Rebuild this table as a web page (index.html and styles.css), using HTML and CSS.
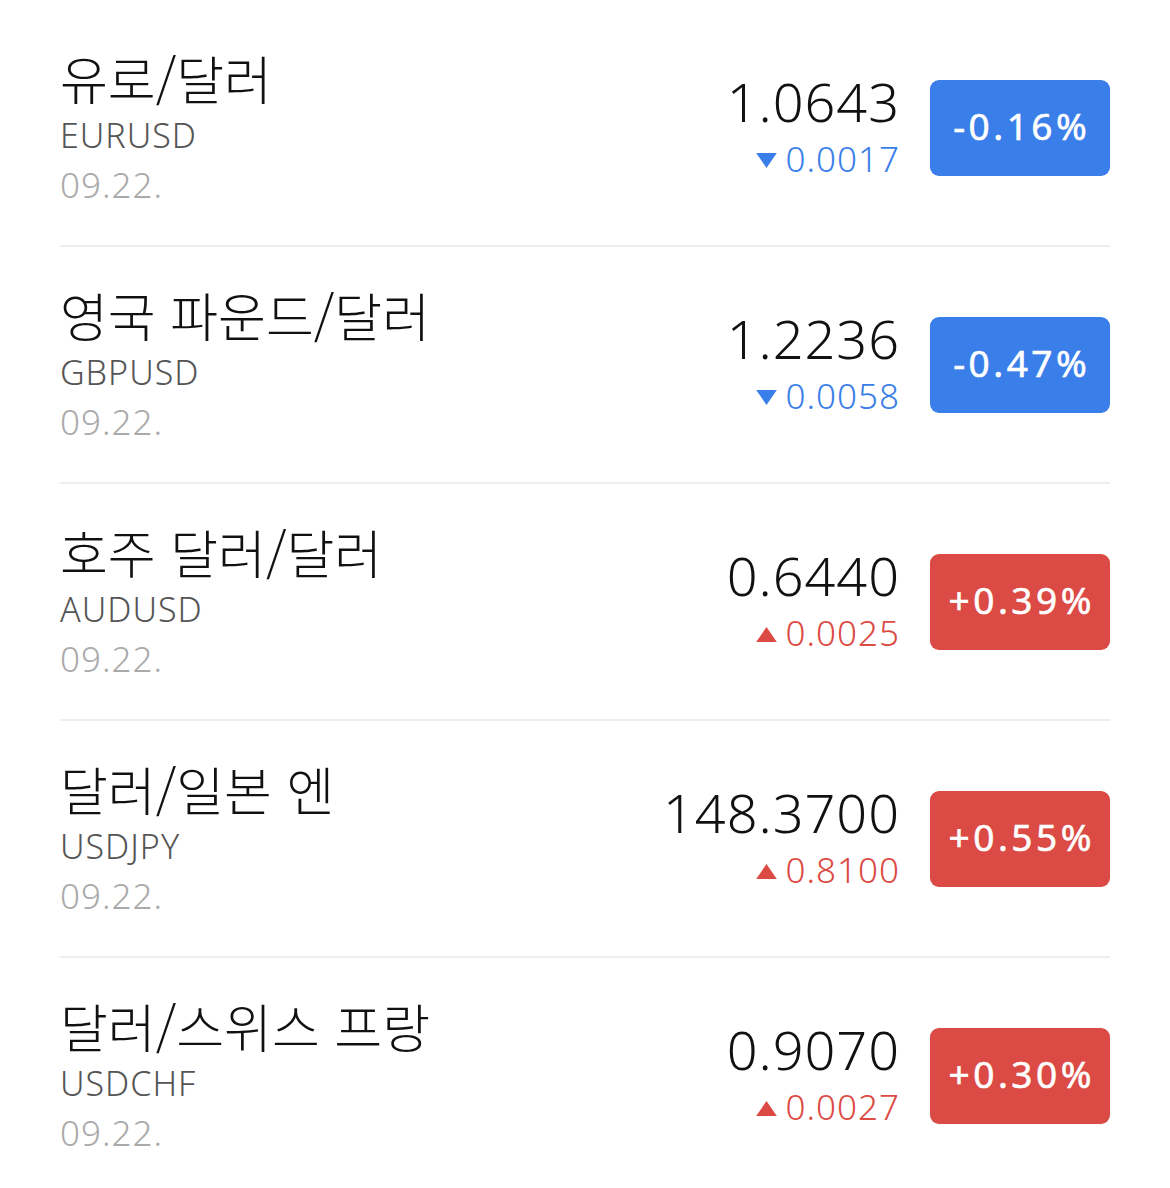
FILE: index.html
```html
<!DOCTYPE html>
<html lang="ko">
<head>
<meta charset="utf-8">
<title>환율</title>
<link rel="stylesheet" href="styles.css">
</head>
<body>
<ul class="list">
  <li class="item">
    <div class="info">
      <div class="name">유로/달러</div>
      <div class="code">EURUSD</div>
      <div class="date">09.22.</div>
    </div>
    <div class="quote">
      <div class="price">1.0643</div>
      <div class="change down"><svg class="tri" viewBox="0 0 22 16"><path d="M0 0H22L11 16Z"/></svg>0.0017</div>
    </div>
    <div class="badge down">-0.16%</div>
  </li>
  <li class="item">
    <div class="info">
      <div class="name">영국 파운드/달러</div>
      <div class="code">GBPUSD</div>
      <div class="date">09.22.</div>
    </div>
    <div class="quote">
      <div class="price">1.2236</div>
      <div class="change down"><svg class="tri" viewBox="0 0 22 16"><path d="M0 0H22L11 16Z"/></svg>0.0058</div>
    </div>
    <div class="badge down">-0.47%</div>
  </li>
  <li class="item">
    <div class="info">
      <div class="name">호주 달러/달러</div>
      <div class="code">AUDUSD</div>
      <div class="date">09.22.</div>
    </div>
    <div class="quote">
      <div class="price">0.6440</div>
      <div class="change up"><svg class="tri" viewBox="0 0 22 16"><path d="M0 16H22L11 0Z"/></svg>0.0025</div>
    </div>
    <div class="badge up">+0.39%</div>
  </li>
  <li class="item">
    <div class="info">
      <div class="name">달러/일본 엔</div>
      <div class="code">USDJPY</div>
      <div class="date">09.22.</div>
    </div>
    <div class="quote">
      <div class="price">148.3700</div>
      <div class="change up"><svg class="tri" viewBox="0 0 22 16"><path d="M0 16H22L11 0Z"/></svg>0.8100</div>
    </div>
    <div class="badge up">+0.55%</div>
  </li>
  <li class="item">
    <div class="info">
      <div class="name">달러/스위스 프랑</div>
      <div class="code">USDCHF</div>
      <div class="date">09.22.</div>
    </div>
    <div class="quote">
      <div class="price">0.9070</div>
      <div class="change up"><svg class="tri" viewBox="0 0 22 16"><path d="M0 16H22L11 0Z"/></svg>0.0027</div>
    </div>
    <div class="badge up">+0.30%</div>
  </li>
</ul>
</body>
</html>
```
FILE: styles.css
```css
html, body {
  margin: 0;
  padding: 0;
  background: #fff;
}
body {
  font-family: "Noto Sans", "Noto Sans CJK KR", sans-serif;
  color: #111;
}
.list {
  list-style: none;
  margin: 0;
  padding: 10px 60px 0;
}
.item {
  display: flex;
  align-items: center;
  height: 235px;
  border-bottom: 2px solid #eeeeee;
}
.item:last-child {
  border-bottom: none;
}
.info {
  flex: 1;
  display: flex;
  flex-direction: column;
}
.name {
  font-family: "Noto Sans CJK KR", sans-serif;
  font-size: 52px;
  line-height: 66px;
  font-weight: 300;
  color: #111;
}
.code {
  font-size: 34px;
  line-height: 48px;
  font-weight: 300;
  color: #555;
  letter-spacing: 1px;
}
.date {
  font-size: 35px;
  line-height: 52px;
  font-weight: 300;
  color: #aaa;
  letter-spacing: 1px;
}
.quote {
  display: flex;
  flex-direction: column;
  align-items: flex-end;
  margin-right: 30px;
}
.price {
  font-size: 54px;
  line-height: 62px;
  font-weight: 300;
  color: #111;
  letter-spacing: 1px;
}
.change {
  display: flex;
  align-items: center;
  font-size: 35px;
  line-height: 54px;
  font-weight: 300;
  letter-spacing: 1px;
}
.change.down { color: #3a7ee9; }
.change.up { color: #dc4a44; }
.tri {
  width: 23px;
  height: 15px;
  margin: 3px 8px 0 0;
  fill: currentColor;
}
.badge {
  width: 180px;
  height: 96px;
  border-radius: 9px;
  display: flex;
  align-items: center;
  justify-content: center;
  color: #fff;
  font-size: 37px;
  font-weight: 400;
  -webkit-text-stroke: 0.6px #fff;
  letter-spacing: 3.5px;
  padding: 0 0 5px 3.5px;
  box-sizing: border-box;
}
.badge.down { background: #3a7ee9; }
.badge.up { background: #db4a44; }
```
